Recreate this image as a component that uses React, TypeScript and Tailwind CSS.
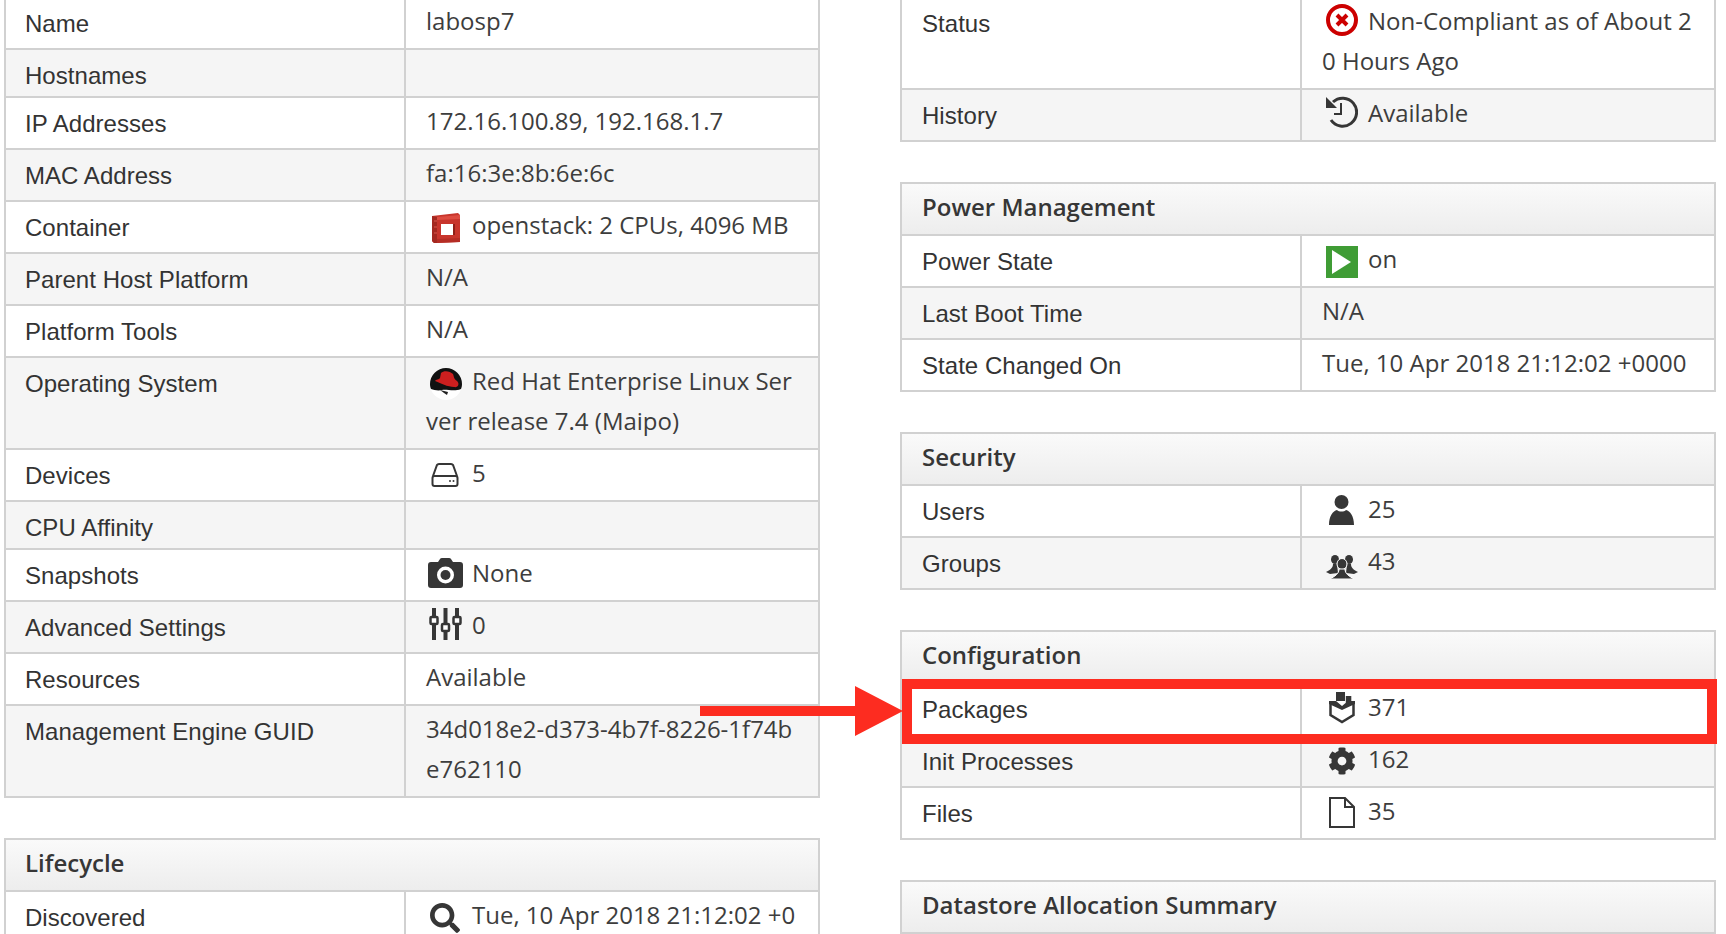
import type { ReactNode } from "react";
import { FaCog, FaSearch } from "react-icons/fa";

const sans = "font-['Liberation_Sans',Arial,sans-serif]";
const open = "font-['Open_Sans',sans-serif]";

function Ico({ className, children }: { className: string; children: ReactNode }) {
  return <span className={`inline-block w-8 ml-1 mr-2.5 align-top text-[#363636] ${className}`}>{children}</span>;
}

function Row({ label, gray, right, children }: { label: string; gray?: boolean; right?: boolean; children?: ReactNode }) {
  return (
    <div className={`flex border-b-2 border-[#d1d1d1] ${gray ? "bg-[#f5f5f5]" : "bg-white"}`}>
      <div className={`w-[398px] shrink-0 ${right ? "pl-5" : "pl-[19px]"} pt-[6px] text-2xl leading-10 tracking-[0.04px] text-[#333333] ${sans}`}>{label}</div>
      <div className={`flex-1 min-w-0 border-l-2 border-[#d1d1d1] pl-5 pr-5 pt-[3px] pb-[7px] text-2xl leading-10 text-[#3d3d3d] break-all ${open}`}>
        {children}
      </div>
    </div>
  );
}

function Panel({ title, right, children, className = "" }: { title?: string; right?: boolean; children?: ReactNode; className?: string }) {
  return (
    <div className={`border-x-2 border-[#d1d1d1] ${title ? "border-t-2" : ""} ${className}`}>
      {title && (
        <div className={`border-b-2 border-[#d1d1d1] bg-gradient-to-b from-[#fafafa] to-[#ededed] ${right ? "pl-5" : "pl-[19px]"} pt-[3px] pb-[7px] text-2xl leading-10 font-semibold text-[#363636] ${open}`}>
          {title}
        </div>
      )}
      {children}
    </div>
  );
}

const OpenStack = () => (
  <svg width="32" height="32" viewBox="0 0 32 32" className="overflow-visible">
    <path d="M2 3 L28 0 L30 2 L30 29 L4 30 L2 28 Z" fill="#c8352c" />
    <path d="M2 3 L7 4 L7 30 L4 30 L2 28 Z" fill="#a32820" />
    <path d="M4 8 H7 M4 14 H7 M4 20 H7" stroke="#d8574d" strokeWidth="1" />
    <path d="M7 4 L30 2 L30 6 L7 7 Z" fill="#dd4b40" />
    <path d="M7 26 L30 25 L30 29 L7 30 Z" fill="#b52d25" />
    <rect x="11" y="11" width="12" height="11" fill="#fff" />
    <path d="M23 11 h2 v11 h-2 Z" fill="#8f2018" />
  </svg>
);

const RedHat = () => (
  <svg width="32" height="32" viewBox="0 0 32 32">
    <circle cx="16" cy="16" r="16" fill="#fff" />
    <path d="M16 0 A16 16 0 0 1 32 16 C32 18 31.500 20 31 21 C24 24 17 21 12 22 C8 23 4 22 1 21 C0.300 19 0 18 0 16 A16 16 0 0 1 16 0 Z" fill="#111" />
    <path d="M11 5 C14 2 20 3 23 6 C24 9 24 11 27 13 C30 16 28 20 24 19 C18 19 10 15 5 13 C6 11 9 12 10 10 Z" fill="#cc1f1f" />
    <path d="M10 22 L18 24 L17 27 L14 25 Z" fill="#222" />
  </svg>
);

const Drive = () => (
  <svg width="28" height="24" viewBox="0 0 28 24" fill="none" stroke="#363636" strokeWidth="2" className="ml-[1px]">
    <path d="M2 13 L6 2 Q6.500 1 8 1 H20 Q21.500 1 22 2 L26 13" />
    <rect x="1.500" y="13" width="25" height="10" rx="2" />
    <circle cx="19" cy="18" r="1" fill="#363636" stroke="none" />
    <circle cx="22.500" cy="18" r="1" fill="#363636" stroke="none" />
  </svg>
);

const Camera = () => (
  <svg width="35" height="30" viewBox="0 0 35 30" className="-ml-[2px]">
    <path d="M3 4 H10 L12 1 Q12.500 0 14 0 H21 Q22.500 0 23 1 L25 4 H32 Q35 4 35 7 V27 Q35 30 32 30 H3 Q0 30 0 27 V7 Q0 4 3 4 Z" fill="#363636" />
    <circle cx="17.500" cy="17" r="8.500" fill="#fff" />
    <circle cx="17.500" cy="17" r="5" fill="#363636" />
  </svg>
);

const Sliders = () => (
  <svg width="33" height="32" viewBox="0 0 33 32" className="-ml-[1px]">
    <g fill="#363636">
      <rect x="3" y="0" width="4" height="32" />
      <rect x="14.500" y="0" width="4" height="32" />
      <rect x="26" y="0" width="4" height="32" />
    </g>
    <g fill="#fff" stroke="#363636" strokeWidth="2.500">
      <rect x="1.500" y="9" width="7" height="7" rx="1" />
      <rect x="13" y="16" width="7" height="7" rx="1" />
      <rect x="24.500" y="9" width="7" height="7" rx="1" />
    </g>
  </svg>
);

const XCircle = () => (
  <svg width="32" height="32" viewBox="0 0 32 32">
    <circle cx="16" cy="16" r="14" fill="#fff" stroke="#cc0000" strokeWidth="4" />
    <path d="M11 11 L21 21 M21 11 L11 21" stroke="#cc0000" strokeWidth="4" />
  </svg>
);

const HistoryIcon = () => (
  <svg width="32" height="32" viewBox="0 0 32 32" fill="none" stroke="#363636" strokeWidth="3">
    <path d="M7 6 A14 14 0 1 1 5 24" />
    <path d="M0 1 L0 12 L11 12 Z" fill="#363636" stroke="none" />
    <path d="M15 7 V18 H8" strokeWidth="2" />
  </svg>
);

const Play = () => (
  <svg width="32" height="32" viewBox="0 0 32 32">
    <rect width="32" height="32" fill="#3f9c35" />
    <path d="M6 4 L25 16 L6 28 Z" fill="#fff" />
  </svg>
);

const User = () => (
  <svg width="25" height="30" viewBox="0 0 25 30" className="ml-[3px]">
    <circle cx="12.500" cy="7" r="7" fill="#363636" />
    <path d="M0 30 C0 21 4 16 8 15 C10 17 15 17 17 15 C21 16 25 21 25 30 Z" fill="#363636" />
  </svg>
);

const Group = () => (
  <svg width="32" height="24" viewBox="0 0 32 24" fill="#363636">
    <ellipse cx="9" cy="4.500" rx="4" ry="4.500" />
    <path d="M0 17 C4 15 7 13 7 9 L11 9 L12 18 L4 19 Z" />
    <ellipse cx="23" cy="4.500" rx="4" ry="4.500" />
    <path d="M32 17 C28 15 25 13 25 9 L21 9 L20 18 L28 19 Z" />
    <ellipse cx="16" cy="9" rx="5" ry="5.500" stroke="#fff" strokeWidth="1" />
    <path d="M4 24 C9 21 13 19 13 14 L19 14 C19 19 23 21 28 24 Z" stroke="#fff" strokeWidth="1" />
  </svg>
);

const PackageIcon = () => (
  <svg width="28" height="32" viewBox="0 0 28 32" className="ml-[2px]">
    <path d="M2.500 10 V23 L14 30 L25.500 23 V10" fill="#fff" stroke="#363636" strokeWidth="2.500" />
    <path d="M1 9 H8 L14 14 L20 9 H27 V12 L14 18 L1 12 Z" fill="#363636" />
    <rect x="8" y="0" width="9" height="9" fill="#363636" />
    <rect x="17.800" y="4" width="5.500" height="7" fill="#363636" />
  </svg>
);

const FileIcon = () => (
  <svg width="28" height="32" viewBox="0 0 28 32" fill="none" stroke="#363636" strokeWidth="2" className="ml-[2px]">
    <path d="M2 1 H17 L26 10 V30 H2 Z" />
    <path d="M17 1 V10 H26" />
  </svg>
);

export default function App() {
  return (
    <div className="relative h-[934px] w-full overflow-hidden bg-white">
      <div className="flex -mt-[2px] pl-1">
        <div className="w-[816px] shrink-0">
          <Panel>
            <Row label="Name">labosp7</Row>
            <Row label="Hostnames" gray />
            <Row label="IP Addresses">172.16.100.89, 192.168.1.7</Row>
            <Row label="MAC Address" gray>fa:16:3e:8b:6e:6c</Row>
            <Row label="Container">
              <Ico className="mt-[8px]"><OpenStack /></Ico>openstack: 2 CPUs, 4096 MB
            </Row>
            <Row label="Parent Host Platform" gray>N/A</Row>
            <Row label="Platform Tools">N/A</Row>
            <Row label="Operating System" gray>
              <Ico className="mt-[7px]"><RedHat /></Ico>Red Hat Enterprise Linux Server release 7.4 (Maipo)
            </Row>
            <Row label="Devices">
              <Ico className="mt-[10px]"><Drive /></Ico>5
            </Row>
            <Row label="CPU Affinity" gray />
            <Row label="Snapshots">
              <Ico className="mt-[5px]"><Camera /></Ico>None
            </Row>
            <Row label="Advanced Settings" gray>
              <Ico className="mt-[3px]"><Sliders /></Ico>0
            </Row>
            <Row label="Resources">Available</Row>
            <Row label="Management Engine GUID" gray>34d018e2-d373-4b7f-8226-1f74be762110</Row>
          </Panel>
          <Panel title="Lifecycle" className="mt-10">
            <Row label="Discovered">
              <Ico className="mt-[8px]"><FaSearch size={30} /></Ico>Tue, 10 Apr 2018 21:12:02 +0000
            </Row>
          </Panel>
        </div>

        <div className="ml-20 w-[816px] shrink-0">
          <Panel>
            <Row right label="Status">
              <Ico className="mt-[3px]"><XCircle /></Ico>Non-Compliant as of About 20 Hours Ago
            </Row>
            <Row right label="History" gray>
              <Ico className="mt-[3px]"><HistoryIcon /></Ico>Available
            </Row>
          </Panel>
          <Panel right title="Power Management" className="mt-10">
            <Row right label="Power State">
              <Ico className="mt-[7px]"><Play /></Ico>on
            </Row>
            <Row right label="Last Boot Time" gray>N/A</Row>
            <Row right label="State Changed On">Tue, 10 Apr 2018 21:12:02 +0000</Row>
          </Panel>
          <Panel right title="Security" className="mt-10">
            <Row right label="Users">
              <Ico className="mt-[6px]"><User /></Ico>25
            </Row>
            <Row right label="Groups" gray>
              <Ico className="mt-[14px]"><Group /></Ico>43
            </Row>
          </Panel>
          <Panel right title="Configuration" className="mt-10">
            <Row right label="Packages">
              <Ico className="mt-[5px]"><PackageIcon /></Ico>371
            </Row>
            <Row right label="Init Processes" gray>
              <Ico className="mt-[8px] pl-[2px]"><FaCog size={28} /></Ico>162
            </Row>
            <Row right label="Files">
              <Ico className="mt-[6px]"><FileIcon /></Ico>35
            </Row>
          </Panel>
          <Panel right title="Datastore Allocation Summary" className="mt-10" />
        </div>
      </div>

      {/* annotation drawn over the screenshot */}
      <div className="absolute left-[902px] top-[679px] h-[65px] w-[815px] border-[10px] border-[#fd2c20]" />
      <svg className="absolute left-[700px] top-[686px]" width="204" height="50" viewBox="0 0 204 50">
        <path d="M0 20 H155 V0 L203 25 L155 50 V30 H0 Z" fill="#fd2c20" />
      </svg>
    </div>
  );
}
